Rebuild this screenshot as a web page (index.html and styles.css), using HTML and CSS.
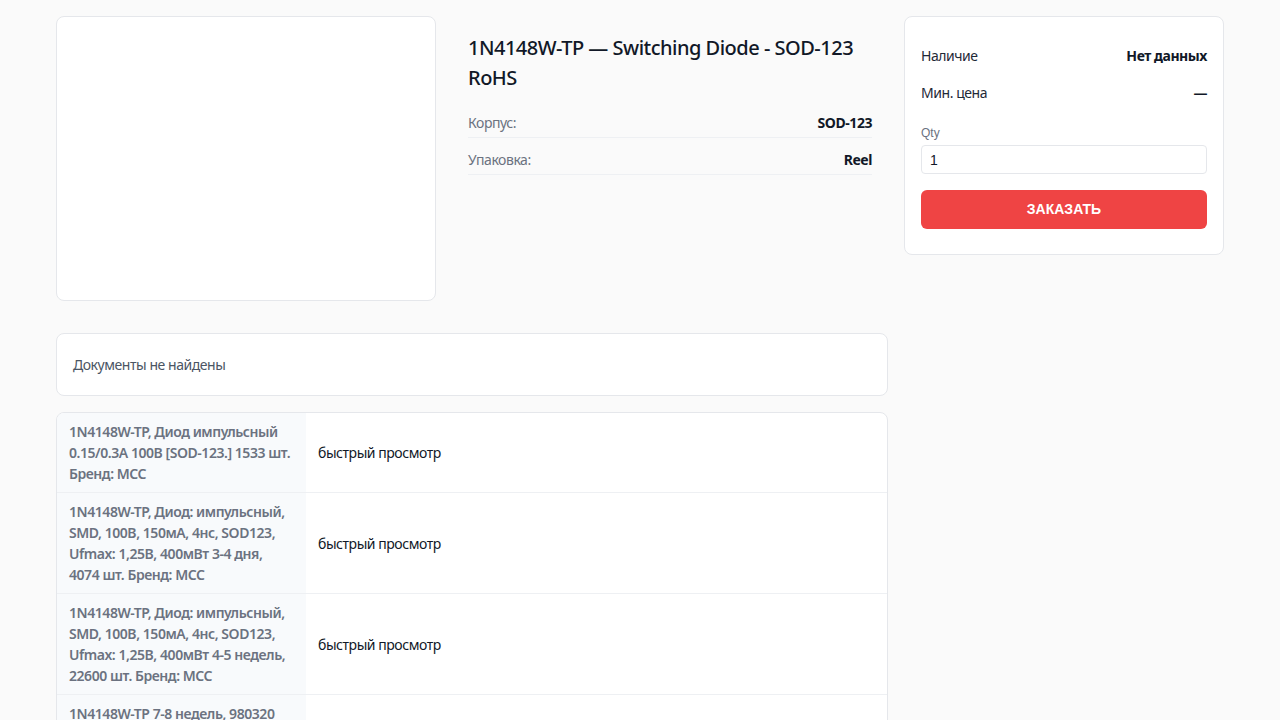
FILE: index.html
```html
<!DOCTYPE html>
<html lang="ru">
<head>
<meta charset="utf-8">
<title>1N4148W-TP</title>
<link rel="stylesheet" href="styles.css">
</head>
<body>
<div class="page">
  <main class="main">
    <section class="top">
      <div class="card image-card"></div>
      <div class="info">
        <h1 class="title">1N4148W-TP — Switching Diode - SOD-123 RoHS</h1>
        <div class="spec">
          <div class="spec-row"><span class="spec-label">Корпус:</span><span class="spec-value">SOD-123</span></div>
          <div class="spec-row"><span class="spec-label">Упаковка:</span><span class="spec-value">Reel</span></div>
        </div>
      </div>
    </section>
    <section class="card docs">Документы не найдены</section>
    <section class="card offers">
      <table class="offers-table">
        <tr>
          <th>1N4148W-TP, Диод импульсный 0.15/0.3A 100B [SOD-123.] 1533 шт. Бренд: MCC</th>
          <td>быстрый просмотр</td>
        </tr>
        <tr>
          <th>1N4148W-TP, Диод: импульсный, SMD, 100В, 150мА, 4нс, SOD123, Ufmax: 1,25В, 400мВт 3-4 дня, 4074 шт. Бренд: MCC</th>
          <td>быстрый просмотр</td>
        </tr>
        <tr>
          <th>1N4148W-TP, Диод: импульсный, SMD, 100В, 150мА, 4нс, SOD123, Ufmax: 1,25В, 400мВт 4-5 недель, 22600 шт. Бренд: MCC</th>
          <td>быстрый просмотр</td>
        </tr>
        <tr>
          <th>1N4148W-TP 7-8 недель, 980320 шт. Бренд: Micro Commercial Components</th>
          <td>быстрый просмотр</td>
        </tr>
      </table>
    </section>
  </main>
  <aside class="side">
    <div class="card buy">
      <div class="buy-row"><span class="buy-label">Наличие</span><span class="buy-value">Нет данных</span></div>
      <div class="buy-row"><span class="buy-label">Мин. цена</span><span class="buy-value">—</span></div>
      <label class="qty-label" for="qty">Qty</label>
      <input class="qty-input" id="qty" type="text" value="1">
      <button class="order-btn" type="button">ЗАКАЗАТЬ</button>
    </div>
  </aside>
</div>
</body>
</html>
```
FILE: styles.css
```css
* { box-sizing: border-box; }
html, body { margin: 0; padding: 0; }
body {
  background: #fafafa;
  font-family: "Noto Sans", "Open Sans", sans-serif;
  font-size: 14px;
  line-height: 21px;
  letter-spacing: -0.45px;
  color: #111827;
}
.page {
  width: 1200px;
  margin: 0 auto;
  padding: 16px;
  display: grid;
  grid-template-columns: 1fr 320px;
  gap: 16px;
  align-items: start;
}
.card {
  background: #fff;
  border: 1px solid #e5e7eb;
  border-radius: 8px;
}
.top {
  display: grid;
  grid-template-columns: 380px 1fr;
  gap: 32px;
}
.image-card { height: 285px; }
.info { padding: 17px 16px 0 0; }
.title {
  margin: 0 0 8px;
  font-size: 20px;
  line-height: 30px;
  font-weight: 500;
  letter-spacing: -0.5px;
  color: #111827;
}
.spec-row {
  display: flex;
  justify-content: space-between;
  padding: 11px 0 4px;
  border-bottom: 1px solid #eef0f3;
}
.spec-label { color: #6b7280; }
.spec-value { font-weight: 700; color: #111827; }
.docs {
  margin-top: 32px;
  padding: 20px 16px;
  color: #4b5563;
}
.offers {
  margin-top: 16px;
  overflow: hidden;
}
.offers-table {
  width: 100%;
  border-collapse: collapse;
}
.offers-table th {
  width: 30%;
  text-align: left;
  vertical-align: middle;
  background: #f8fafc;
  color: #6b7280;
  font-weight: 600;
  padding: 8px 12px;
}
.offers-table td {
  padding: 8px 12px;
  vertical-align: middle;
}
.offers-table tr + tr th,
.offers-table tr + tr td { border-top: 1px solid #eef0f3; }
.buy { padding: 20px 16px 25px; display: flex; flex-direction: column; }
.buy-row {
  display: flex;
  justify-content: space-between;
  padding: 8px 0;
}
.buy-label { color: #1f2937; }
.buy-value { font-weight: 700; color: #111827; }
.qty-label {
  margin-top: 14px;
  font-size: 12px;
  line-height: 16px;
  color: #6b7280;
  letter-spacing: 0;
  font-family: "Liberation Sans", Arial, sans-serif;
}
.qty-input {
  margin-top: 4px;
  height: 29px;
  border: 1px solid #e5e7eb;
  border-radius: 4px;
  padding: 4px 8px;
  font-family: "Liberation Sans", Arial, sans-serif;
  font-size: 14px;
  letter-spacing: 0;
  color: #111827;
  background: #fff;
}
.order-btn {
  margin-top: 16px;
  height: 39px;
  border: 0;
  border-radius: 6px;
  background: #ef4444;
  color: #fff;
  font-family: "Liberation Sans", Arial, sans-serif;
  font-weight: 700;
  font-size: 14px;
  line-height: 39px;
  padding: 0;
  letter-spacing: 0;
}
```
